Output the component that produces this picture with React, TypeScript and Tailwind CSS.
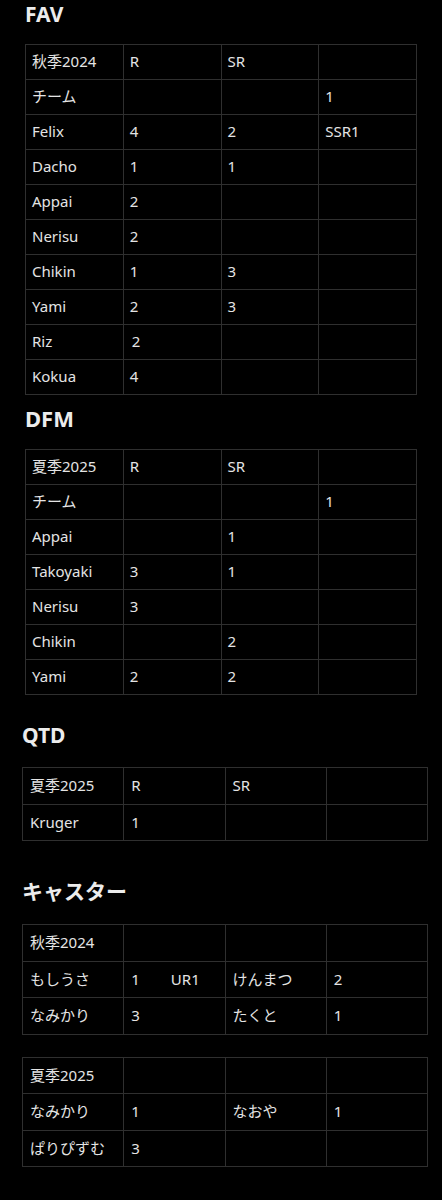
import React from 'react';

type Row = React.ReactNode[];

const font = { fontFamily: '"Noto Sans", "Noto Sans CJK JP", sans-serif' };

const fav: Row[] = [
  ['秋季2024', 'R', 'SR', ''],
  ['チーム', '', '', '1'],
  ['Felix', '4', '2', 'SSR1'],
  ['Dacho', '1', '1', ''],
  ['Appai', '2', '', ''],
  ['Nerisu', '2', '', ''],
  ['Chikin', '1', '3', ''],
  ['Yami', '2', '3', ''],
  ['Riz', <span className="pl-[2px]">2</span>, '', ''],
  ['Kokua', '4', '', ''],
];

const dfm: Row[] = [
  ['夏季2025', 'R', 'SR', ''],
  ['チーム', '', '', '1'],
  ['Appai', '', '1', ''],
  ['Takoyaki', '3', '1', ''],
  ['Nerisu', '3', '', ''],
  ['Chikin', '', '2', ''],
  ['Yami', '2', '2', ''],
];

const qtd: Row[] = [
  ['夏季2025', 'R', 'SR', ''],
  ['Kruger', '1', '', ''],
];

const caster1: Row[] = [
  ['秋季2024', '', '', ''],
  ['もしうさ', <span>1<span className="ml-[31px]">UR1</span></span>, 'けんまつ', '2'],
  ['なみかり', '3', 'たくと', '1'],
];

const caster2: Row[] = [
  ['夏季2025', '', '', ''],
  ['なみかり', '1', 'なおや', '1'],
  ['ぱりぴずむ', '3', '', ''],
];

function Table({ rows, wide }: { rows: Row[]; wide?: boolean }) {
  return (
    <table className={`table-fixed border-collapse ${wide ? 'w-[406px]' : 'w-[392px]'}`}>
      <tbody>
        {rows.map((r, i) => (
          <tr key={i}>
            {r.map((c, j) => (
              <td
                key={j}
                className={`border border-[#2f2f2f] text-[15px] text-[#e4e4e4] whitespace-nowrap align-middle pb-[1px] ${
                  wide ? 'h-[36.5px] pl-[7px]' : 'h-[35px] pl-[6px]'
                }`}
              >
                {c}
              </td>
            ))}
          </tr>
        ))}
      </tbody>
    </table>
  );
}

function Heading({ children, size = 'text-[21px]' }: { children: React.ReactNode; size?: string }) {
  return <h2 className={`${size} leading-[28px] font-bold text-[#ececec]`}>{children}</h2>;
}

export default function App() {
  return (
    <div className="bg-black min-h-[1200px] w-[442px] overflow-hidden" style={font}>
      {/* FAV */}
      <section className="pl-[25px]">
        <Heading>FAV</Heading>
        <div className="mt-[16px]">
          <Table rows={fav} />
        </div>
      </section>

      {/* DFM */}
      <section className="pl-[25px] mt-[9px]">
        <Heading size="text-[22px]">DFM</Heading>
        <div className="mt-[17px]">
          <Table rows={dfm} />
        </div>
      </section>

      {/* QTD */}
      <section className="pl-[22px] mt-[26px]">
        <Heading>QTD</Heading>
        <div className="mt-[18px]">
          <Table rows={qtd} wide />
        </div>
      </section>

      {/* キャスター */}
      <section className="pl-[22px] mt-[36px]">
        <Heading>キャスター</Heading>
        <div className="mt-[19px]">
          <Table rows={caster1} wide />
        </div>
        <div className="mt-[22px]">
          <Table rows={caster2} wide />
        </div>
      </section>
    </div>
  );
}
